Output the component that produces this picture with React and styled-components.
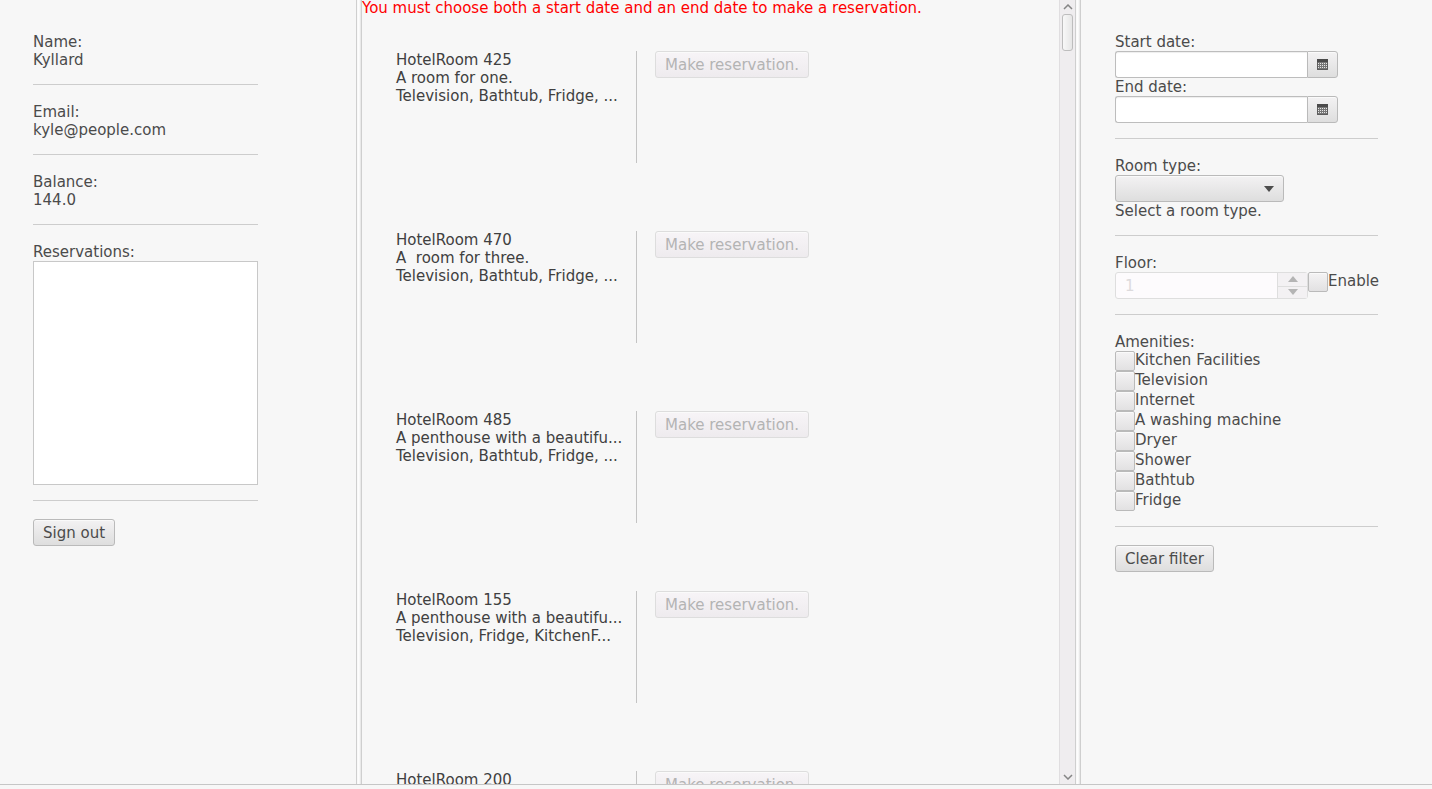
import React from "react";
import styled, { createGlobalStyle, css } from "styled-components";

const GlobalStyle = createGlobalStyle`
  *, *::before, *::after { box-sizing: border-box; }
  body {
    margin: 0;
    background: #f7f7f7;
    color: #4b4b4b;
    font: 15px/18px "DejaVu Sans", sans-serif;
  }
  button, input, select { font: inherit; color: inherit; margin: 0; }
`;

const Page = styled.div`
  height: 100vh;
  padding-bottom: 4px;
  display: flex;
  flex-direction: column;
`;

const SplitPane = styled.div`
  flex: 1;
  min-height: 0;
  display: grid;
  grid-template-columns: minmax(291px, 356fr) 6px minmax(460px, 713fr) 6px minmax(330px, 351fr);
  grid-template-rows: minmax(0, 1fr);
  border-bottom: 1px solid #c6c6c6;
`;

const Divider = styled.div`
  border: solid #cfcfcf;
  border-width: 0 1px;
  background: linear-gradient(to right, #f7f7f7, #ffffff 50%, #e2e2e2);
`;

const SidePanel = styled.aside`
  padding: 33px 0 33px ${(p) => p.$inset}px;
  overflow: hidden;
`;

const PanelBody = styled.div`
  width: ${(p) => p.$width}px;
  display: flex;
  flex-direction: column;
`;

const Separator = styled.hr`
  width: 100%;
  height: 1px;
  margin: 15px 0 18px;
  border: 0;
  background: #cdcdcd;
`;

const Line = styled.div`
  white-space: pre;
`;

const FieldLabel = styled.label`
  display: block;
  align-self: flex-start;
`;

const raised = css`
  border: 1px solid #bababa;
  background: linear-gradient(#f3f2f3, #dedede);
  box-shadow: inset 0 1px #fafafa;
`;

const Button = styled.button`
  ${raised}
  align-self: flex-start;
  height: 27px;
  padding: 0 9px;
  border-radius: 3px;
  line-height: 18px;
  white-space: nowrap;
  &:disabled {
    color: #b4b4b4;
    border-color: #dddddd;
    background: linear-gradient(#f7f4f7, #eeebee);
  }
`;

const ReservationList = styled.div`
  height: 224px;
  border: 1px solid #c8c8c8;
  background: #ffffff;
`;

const Rooms = styled.main`
  display: flex;
  min-width: 0;
`;

const RoomScroller = styled.div`
  flex: 1;
  min-width: 0;
  overflow: hidden;
  color: #404040;
`;

const Warning = styled.p`
  margin: 0;
  line-height: 17px;
  color: #ff0000;
`;

const RoomRow = styled.article`
  display: grid;
  grid-template-columns: 222px 1px max-content;
  column-gap: 18px;
  height: 180px;
  padding: 34px;
`;

const RoomRule = styled.div`
  background: #c4c4c4;
`;

const ScrollBar = styled.div`
  width: 16px;
  display: flex;
  flex-direction: column;
  border-left: 1px solid #e0dee0;
  background: #efedef;
`;

const ScrollArrow = styled.button`
  height: 14px;
  padding: 0;
  border: 0;
  background: none;
  display: flex;
  align-items: center;
  justify-content: center;
`;

const ScrollTrack = styled.div`
  flex: 1;
  padding: 0 2px;
`;

const ScrollThumb = styled.div`
  height: 37px;
  border: 1px solid #bdbdbd;
  border-radius: 3px;
  background: linear-gradient(to right, #f8f8f8, #e6e6e6);
`;

const DateField = styled.div`
  width: 223px;
  height: 27px;
  display: flex;
`;

const DateInput = styled.input`
  flex: 1;
  min-width: 0;
  padding: 0 9px;
  border: 1px solid #bdbdbd;
  border-right: 0;
  border-radius: 3px 0 0 3px;
  background: #ffffff;
  box-shadow: inset 0 1px 1px #eeeeee;
`;

const DateButton = styled.button`
  ${raised}
  width: 31px;
  padding: 0;
  border-radius: 0 3px 3px 0;
  display: flex;
  align-items: center;
  justify-content: center;
`;

const SelectWrap = styled.div`
  position: relative;
  width: 169px;
  height: 27px;
  svg {
    position: absolute;
    right: 10px;
    top: 11px;
    pointer-events: none;
  }
`;

const Select = styled.select`
  ${raised}
  appearance: none;
  width: 100%;
  height: 100%;
  padding: 0 30px 0 9px;
  border-radius: 3px;
`;

const FloorRow = styled.div`
  display: flex;
  align-items: flex-start;
`;

const Spinner = styled.div`
  flex: none;
  width: 193px;
  height: 27px;
  display: flex;
  border: 1px solid #dedede;
  border-radius: 3px;
  background: #fdfbfd;
`;

const SpinnerInput = styled.input`
  flex: 1;
  min-width: 0;
  padding: 0 9px;
  border: 0;
  background: none;
  &:disabled { color: #dcdadc; }
`;

const SpinnerButtons = styled.div`
  width: 30px;
  display: grid;
  grid-template-rows: 1fr 1fr;
  border-left: 1px solid #dedede;
`;

const SpinnerButton = styled.button`
  padding: 0;
  border: 0;
  background: #f3f1f3;
  display: flex;
  align-items: center;
  justify-content: center;
  & + & { border-top: 1px solid #dedede; }
`;

const CheckRow = styled.label`
  display: flex;
  align-items: flex-start;
  height: 20px;
  white-space: nowrap;
`;

const CheckBox = styled.input`
  ${raised}
  appearance: none;
  flex: none;
  width: 20px;
  height: 20px;
  border-radius: 2px;
  background: linear-gradient(#f4f3f4, #e2e1e2);
  &:checked { background: #8f8f8f; }
`;

const Triangle = ({ up, fill }) => (
  <svg width="10" height="6" viewBox="0 0 10 6" aria-hidden="true">
    <path d={up ? "M0 6 L5 0 L10 6 Z" : "M0 0 H10 L5 6 Z"} fill={fill} />
  </svg>
);

const Chevron = ({ up }) => (
  <svg width="10" height="6" viewBox="0 0 10 6" aria-hidden="true">
    <path d={up ? "M1 5 L5 1 L9 5" : "M1 1 L5 5 L9 1"} fill="none" stroke="#858585" strokeWidth="1.5" />
  </svg>
);

const CalendarIcon = () => (
  <svg width="11" height="11" viewBox="0 0 11 11" aria-hidden="true">
    <path d="M0 0H11V11H0Z" fill="#777777" />
    <path d="M0 0H11V3H0Z" fill="#4a4a4a" />
    <path d="M1 4.5H10M1 6.5H10M1 8.5H10" stroke="#e6e6e6" strokeDasharray="1 1" />
    <path d="M0.5 3V10.5H10.5V3" fill="none" stroke="#5c5c5c" />
  </svg>
);

const profile = [
  ["Name:", "Kyllard"],
  ["Email:", "kyle@people.com"],
  ["Balance:", "144.0"],
];

const rooms = [
  ["HotelRoom 425", "A room for one.", "Television, Bathtub, Fridge, ..."],
  ["HotelRoom 470", "A  room for three.", "Television, Bathtub, Fridge, ..."],
  ["HotelRoom 485", "A penthouse with a beautifu...", "Television, Bathtub, Fridge, ..."],
  ["HotelRoom 155", "A penthouse with a beautifu...", "Television, Fridge, KitchenF..."],
  ["HotelRoom 200"],
];

const amenities = [
  "Kitchen Facilities",
  "Television",
  "Internet",
  "A washing machine",
  "Dryer",
  "Shower",
  "Bathtub",
  "Fridge",
];

const DatePicker = ({ id, label }) => (
  <>
    <FieldLabel htmlFor={id}>{label}</FieldLabel>
    <DateField>
      <DateInput id={id} type="text" />
      <DateButton type="button" aria-label={`Choose ${id} date`}>
        <CalendarIcon />
      </DateButton>
    </DateField>
  </>
);

export default function App() {
  return (
    <Page>
      <GlobalStyle />
      <SplitPane>
        <SidePanel $inset={33}>
          <PanelBody $width={225}>
            {profile.map(([label, value]) => (
              <React.Fragment key={label}>
                <Line>{label}</Line>
                <Line>{value}</Line>
                <Separator />
              </React.Fragment>
            ))}
            <Line id="reservations">Reservations:</Line>
            <ReservationList role="listbox" aria-labelledby="reservations" />
            <Separator />
            <Button type="button">Sign out</Button>
          </PanelBody>
        </SidePanel>
        <Divider />
        <Rooms>
          <RoomScroller>
            <Warning>You must choose both a start date and an end date to make a reservation.</Warning>
            {rooms.map(([name, ...details]) => (
              <RoomRow key={name}>
                <div>
                  <Line>{name}</Line>
                  {details.map((text) => (
                    <Line key={text}>{text}</Line>
                  ))}
                </div>
                <RoomRule />
                <Button type="button" disabled>Make reservation.</Button>
              </RoomRow>
            ))}
          </RoomScroller>
          <ScrollBar>
            <ScrollArrow type="button" aria-label="Scroll up"><Chevron up /></ScrollArrow>
            <ScrollTrack><ScrollThumb /></ScrollTrack>
            <ScrollArrow type="button" aria-label="Scroll down"><Chevron /></ScrollArrow>
          </ScrollBar>
        </Rooms>
        <Divider />
        <SidePanel $inset={34}>
          <PanelBody $width={263}>
            <DatePicker id="start" label="Start date:" />
            <DatePicker id="end" label="End date:" />
            <Separator />
            <FieldLabel htmlFor="room-type">Room type:</FieldLabel>
            <SelectWrap>
              <Select id="room-type" defaultValue=""><option value="" /></Select>
              <Triangle fill="#4d4d4d" />
            </SelectWrap>
            <Line>Select a room type.</Line>
            <Separator />
            <FieldLabel htmlFor="floor">Floor:</FieldLabel>
            <FloorRow>
              <Spinner>
                <SpinnerInput id="floor" type="text" inputMode="numeric" defaultValue="1" disabled />
                <SpinnerButtons>
                  <SpinnerButton type="button" disabled aria-label="Floor up"><Triangle up fill="#b4b4b4" /></SpinnerButton>
                  <SpinnerButton type="button" disabled aria-label="Floor down"><Triangle fill="#b4b4b4" /></SpinnerButton>
                </SpinnerButtons>
              </Spinner>
              <CheckRow><CheckBox type="checkbox" />Enable</CheckRow>
            </FloorRow>
            <Separator />
            <Line>Amenities:</Line>
            {amenities.map((name) => (
              <CheckRow key={name}><CheckBox type="checkbox" />{name}</CheckRow>
            ))}
            <Separator />
            <Button type="button">Clear filter</Button>
          </PanelBody>
        </SidePanel>
      </SplitPane>
    </Page>
  );
}
